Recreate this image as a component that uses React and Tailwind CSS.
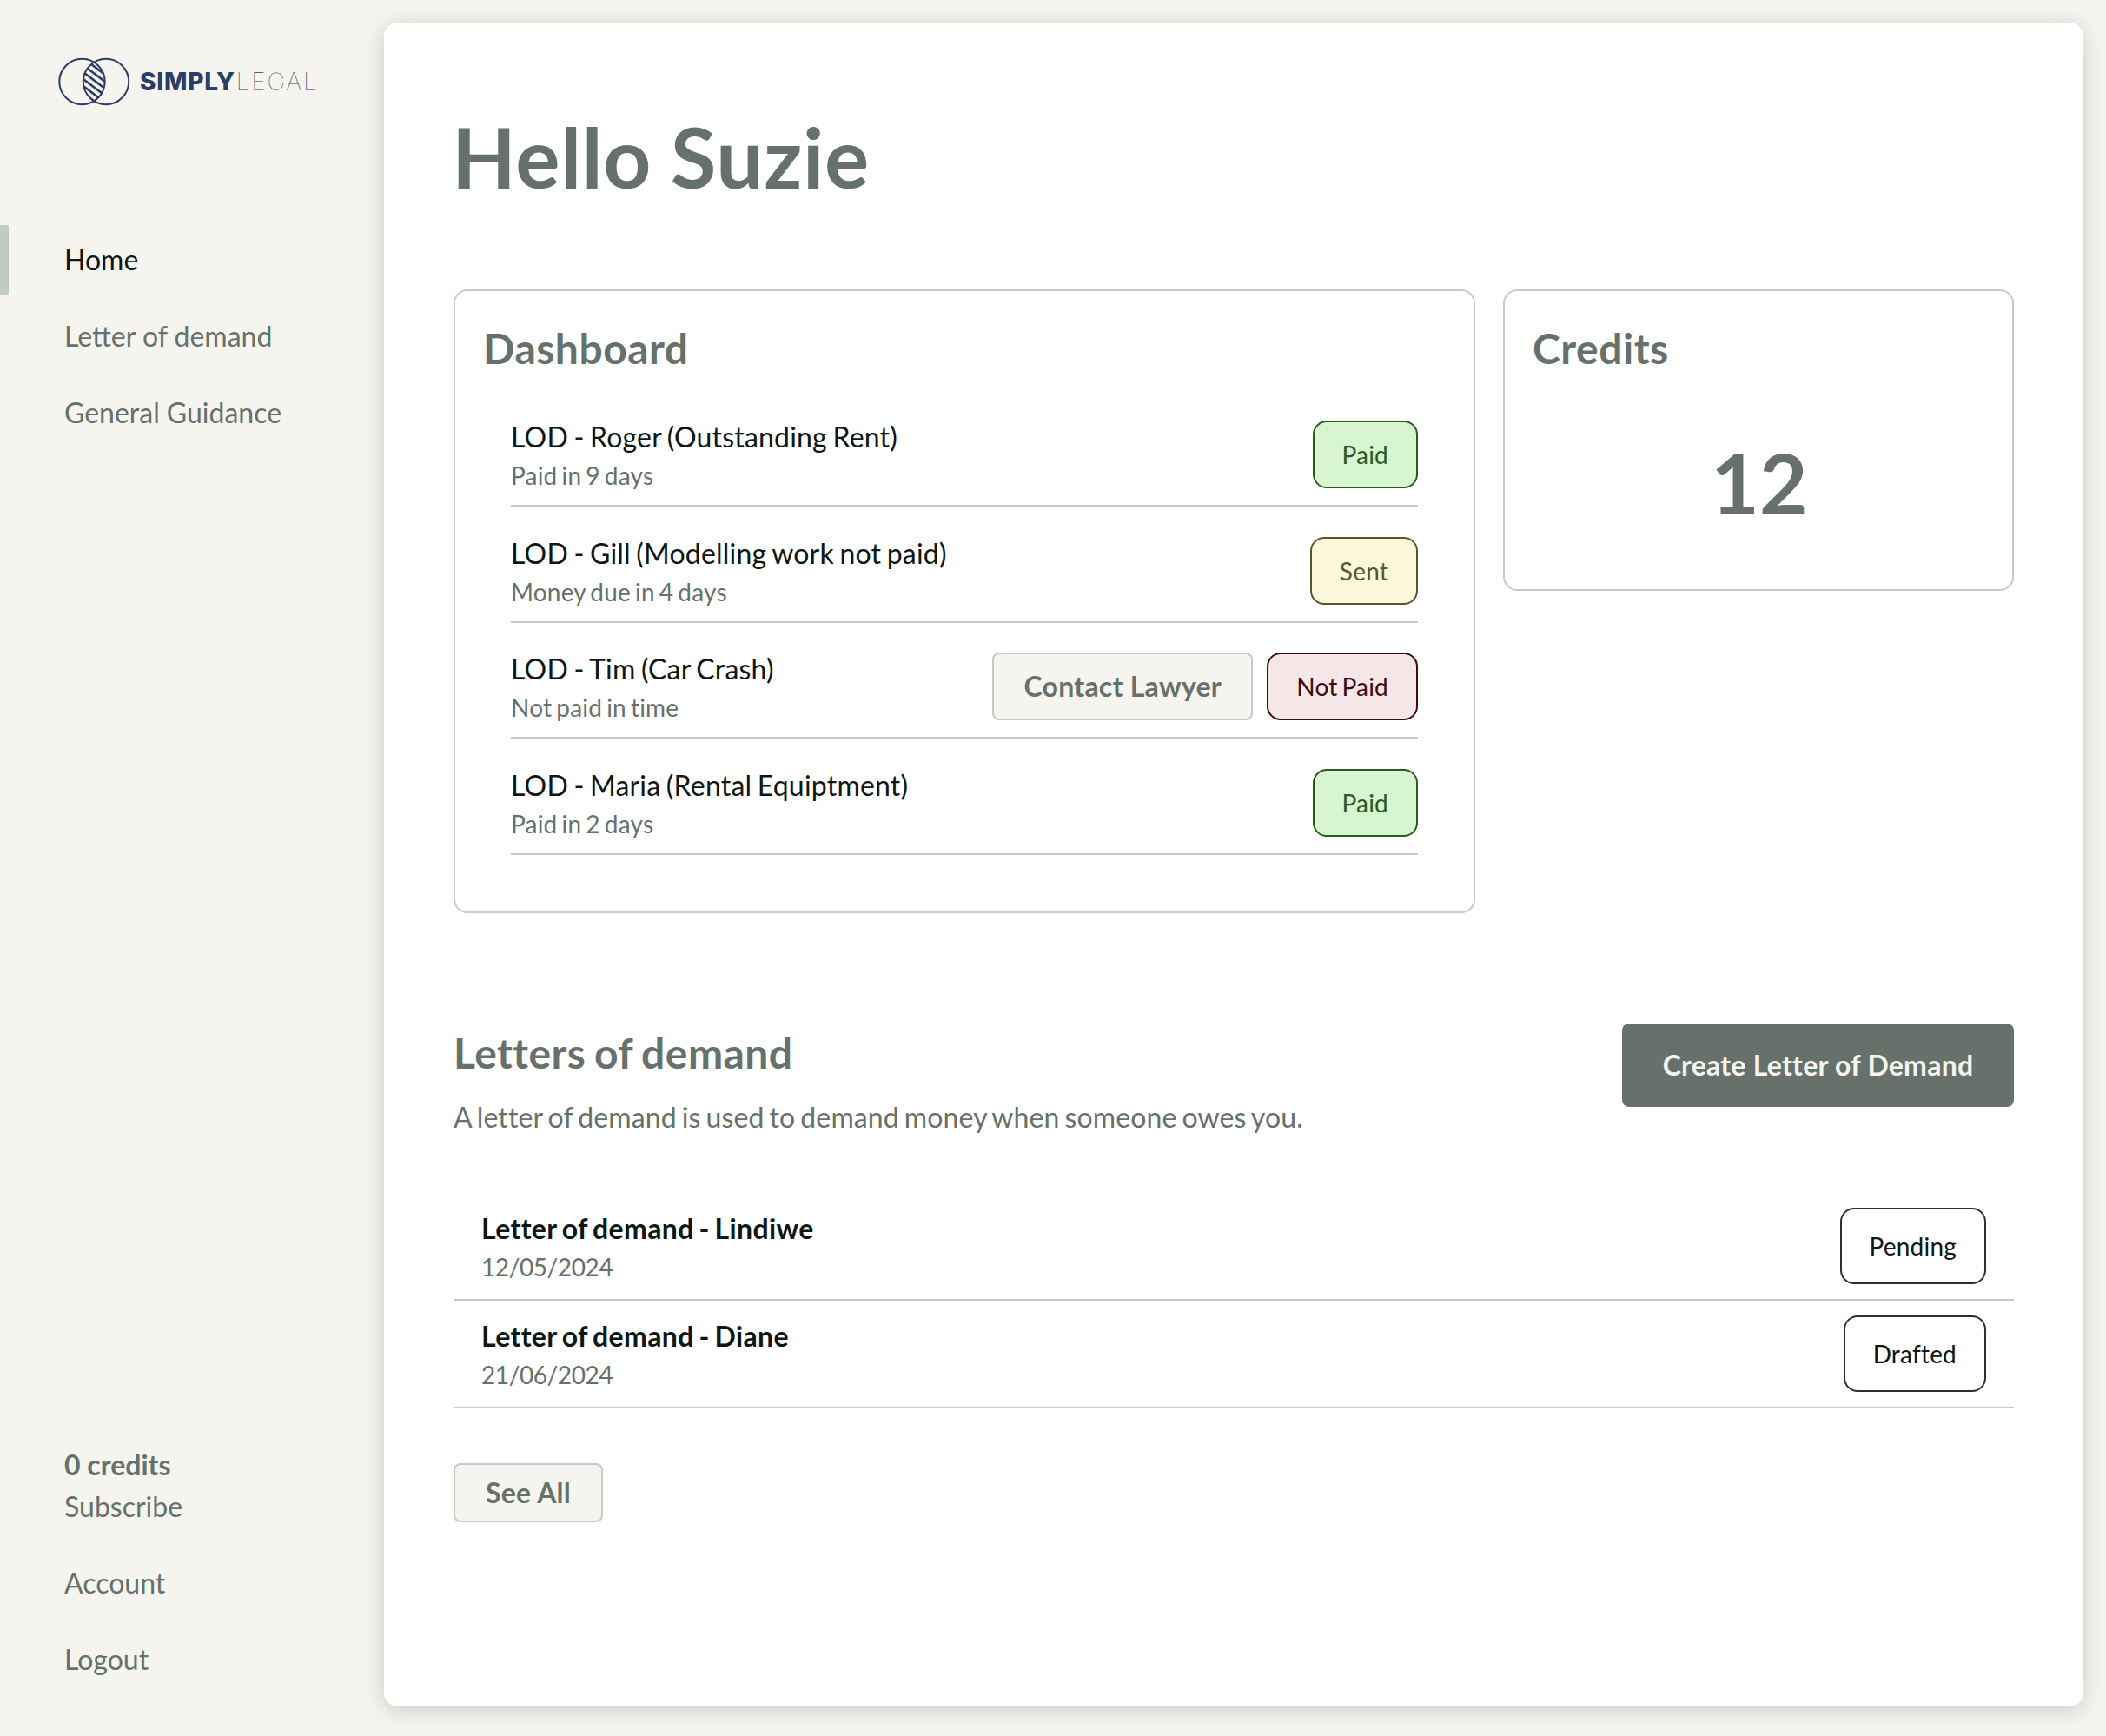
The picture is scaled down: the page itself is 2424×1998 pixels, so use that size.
import React from 'react';

const badgeStyles = {
  paid: 'bg-[#d6f5d0] border-[#2a5a1e] text-[#2a5a1e]',
  sent: 'bg-[#fdf8dc] border-[#5c5626] text-[#5c5626]',
  notPaid: 'bg-[#f5e6e7] border-[#3d0c12] text-[#3d0c12]',
};

const dashboardRows = [
  { title: 'LOD - Roger (Outstanding Rent)', sub: 'Paid in 9 days', status: 'Paid', kind: 'paid' },
  { title: 'LOD - Gill (Modelling work not paid)', sub: 'Money due in 4 days', status: 'Sent', kind: 'sent' },
  { title: 'LOD - Tim (Car Crash)', sub: 'Not paid in time', status: 'Not Paid', kind: 'notPaid', contact: true },
  { title: 'LOD - Maria (Rental Equiptment)', sub: 'Paid in 2 days', status: 'Paid', kind: 'paid' },
];

const letters = [
  { title: 'Letter of demand - Lindiwe', date: '12/05/2024', status: 'Pending' },
  { title: 'Letter of demand - Diane', date: '21/06/2024', status: 'Drafted' },
];

const Logo = () => (
  <div className="flex items-center ml-[66px] h-[56px]">
    <svg width="85" height="56" viewBox="0 0 85 56" fill="none" className="shrink-0">
      <defs>
        <clipPath id="lens">
          <path d="M42.25 5.7A26.2 26.2 0 0 1 42.25 50.3A26.2 26.2 0 0 1 42.25 5.7Z" />
        </clipPath>
      </defs>
      <circle cx="28.5" cy="28" r="26.2" stroke="#2b3d67" strokeWidth="2" />
      <circle cx="56" cy="28" r="26.2" stroke="#2b3d67" strokeWidth="2" />
      <g clipPath="url(#lens)" stroke="#2b3d67" strokeWidth="2.6">
        <path d="M26 -2L60 24M26 6L60 32M26 14L60 40M26 22L60 48M26 30L60 56M26 38L60 64M26 -10L60 16" />
      </g>
    </svg>
    <span className="ml-[10px] text-[28px] leading-none font-extrabold tracking-[0.8px] text-[#2b3d67] font-['Inter',sans-serif]">SIMPLY</span>
    <span className="ml-[1px] text-[28px] leading-none font-thin tracking-[1.8px] text-[#2b3d67] font-['Inter',sans-serif]">LEGAL</span>
  </div>
);

const Sidebar = () => (
  <aside className="w-[442px] shrink-0 flex flex-col justify-between pt-[66px] pb-[48px] text-[32px] text-[#66716c]">
    <div>
      <Logo />
      <nav className="mt-[137px] flex flex-col gap-2">
        <a className="h-[80px] flex items-center pl-[64px] border-l-[10px] border-[#bfcac4] text-[#0d1714]">Home</a>
        <a className="h-[80px] flex items-center pl-[74px]">Letter of demand</a>
        <a className="h-[80px] flex items-center pl-[74px]">General Guidance</a>
      </nav>
    </div>
    <div className="flex flex-col gap-2 pl-[74px]">
      <div className="mb-[16px] flex flex-col leading-[48px]">
        <span className="font-bold">0 credits</span>
        <span>Subscribe</span>
      </div>
      <a className="h-[80px] flex items-center">Account</a>
      <a className="h-[80px] flex items-center">Logout</a>
    </div>
  </aside>
);

const DashboardRow = ({ row }) => (
  <div className="mt-[31.4px] flex items-start justify-between pb-[12px] border-b-2 border-[#c1cdc8]">
    <div className="flex flex-col">
      <span className="text-[32px] leading-[44px] [word-spacing:-1.9px] text-[#0d1714]">{row.title}</span>
      <span className="text-[28px] leading-[44px] text-[#66716c]">{row.sub}</span>
    </div>
    <div className="mt-[3px] flex items-center gap-[16px]">
      {row.contact && (
        <button className="h-[78px] w-[300px] rounded-lg border-2 border-[#c1cdc8] bg-[#f5f4ef] text-[32px] font-bold tracking-[0.25px] text-[#66716c]">
          Contact Lawyer
        </button>
      )}
      <span className={`h-[78px] px-[32px] flex items-center rounded-2xl border-2 text-[28px] ${badgeStyles[row.kind]}`}>
        {row.status}
      </span>
    </div>
  </div>
);

const App = () => (
  <div className="flex w-[2424px] h-[1998px] bg-[#f5f4ef] font-['Lato',sans-serif] overflow-hidden">
    <Sidebar />
    <main className="flex-1 mt-[26px] mr-[26px] mb-[34px] rounded-2xl bg-white shadow-[0_4px_24px_rgba(102,113,108,0.3)] px-[80px] pt-[98px] tracking-[0.2px] [word-spacing:-2.3px]">
      <h1 className="-ml-[2px] text-[96px] leading-[112px] font-bold tracking-[0.7px] text-[#66716c]">Hello Suzie</h1>

      <div className="mt-[97px] grid grid-cols-[2fr_1fr] gap-[32px] items-start">
        <section className="h-[718px] rounded-2xl border-2 border-[#c1cdc8] px-[32px] pt-[34px]">
          <h2 className="text-[48px] leading-[64px] font-bold tracking-[0.5px] text-[#66716c]">Dashboard</h2>
          <div className="mx-[32px] pt-[17px]">
            {dashboardRows.map((row) => (
              <DashboardRow key={row.title} row={row} />
            ))}
          </div>
        </section>
        <section className="h-[347px] rounded-2xl border-2 border-[#c1cdc8] px-[32px] pt-[34px]">
          <h2 className="text-[48px] leading-[64px] font-bold tracking-[0.55px] text-[#66716c]">Credits</h2>
          <div className="mt-[66px] pl-[2px] text-center text-[96px] leading-[112px] font-bold tracking-normal text-[#66716c]">12</div>
        </section>
      </div>

      <section className="mt-[128px]">
        <div className="flex justify-between items-start">
          <div>
            <h2 className="mt-[1px] text-[48px] leading-[64px] font-bold tracking-[0.45px] text-[#66716c]">Letters of demand</h2>
            <p className="mt-[18px] text-[32px] leading-[48px] tracking-[0.12px] text-[#66716c]">
              A letter of demand is used to demand money when someone owes you.
            </p>
          </div>
          <button className="mt-[-1px] h-[96px] w-[451px] rounded-lg bg-[#66716c] text-[32px] font-bold tracking-[0.25px] text-[#f5f4ef]">
            Create Letter of Demand
          </button>
        </div>

        <div className="mt-[63px]">
          {letters.map((l) => (
            <div key={l.title} className="h-[124px] flex items-center justify-between px-[32px] pb-[1px] border-b-2 border-[#c9cbca]">
              <div className="flex flex-col pt-[5px]">
                <span className="text-[32px] leading-[44px] font-bold tracking-[0.35px] text-[#0d1714]">{l.title}</span>
                <span className="text-[28px] leading-[44px] tracking-[-0.4px] text-[#66716c]">{l.date}</span>
              </div>
              <span className="h-[88px] px-[32px] flex items-center rounded-2xl border-2 border-[#26332f] text-[28px] text-[#0d1714]">
                {l.status}
              </span>
            </div>
          ))}
        </div>

        <button className="mt-[63px] h-[68px] w-[172px] rounded-lg border-2 border-[#c1cdc8] bg-[#f5f4ef] text-[32px] font-bold text-[#66716c]">
          See All
        </button>
      </section>
    </main>
  </div>
);

export default App;
